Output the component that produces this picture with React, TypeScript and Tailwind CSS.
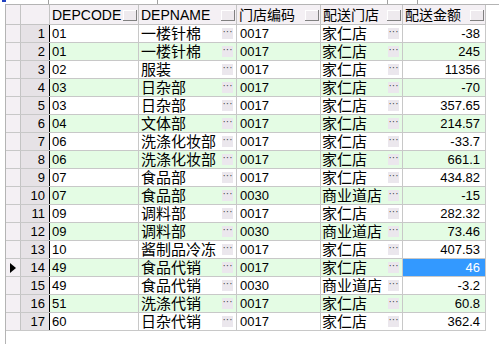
import React from 'react';

type Row = {
  code: string;
  name: string;
  store: string;
  storeName: string;
  amount: string;
};

const rows: Row[] = [
  { code: '01', name: '一楼针棉', store: '0017', storeName: '家仁店', amount: '-38' },
  { code: '01', name: '一楼针棉', store: '0017', storeName: '家仁店', amount: '245' },
  { code: '02', name: '服装', store: '0017', storeName: '家仁店', amount: '11356' },
  { code: '03', name: '日杂部', store: '0017', storeName: '家仁店', amount: '-70' },
  { code: '03', name: '日杂部', store: '0017', storeName: '家仁店', amount: '357.65' },
  { code: '04', name: '文体部', store: '0017', storeName: '家仁店', amount: '214.57' },
  { code: '06', name: '洗涤化妆部', store: '0017', storeName: '家仁店', amount: '-33.7' },
  { code: '06', name: '洗涤化妆部', store: '0017', storeName: '家仁店', amount: '661.1' },
  { code: '07', name: '食品部', store: '0017', storeName: '家仁店', amount: '434.82' },
  { code: '07', name: '食品部', store: '0030', storeName: '商业道店', amount: '-15' },
  { code: '09', name: '调料部', store: '0017', storeName: '家仁店', amount: '282.32' },
  { code: '09', name: '调料部', store: '0030', storeName: '商业道店', amount: '73.46' },
  { code: '10', name: '酱制品冷冻', store: '0017', storeName: '家仁店', amount: '407.53' },
  { code: '49', name: '食品代销', store: '0017', storeName: '家仁店', amount: '46' },
  { code: '49', name: '食品代销', store: '0030', storeName: '商业道店', amount: '-3.2' },
  { code: '51', name: '洗涤代销', store: '0017', storeName: '家仁店', amount: '60.8' },
  { code: '60', name: '日杂代销', store: '0017', storeName: '家仁店', amount: '362.4' },
];

const SELECTED_ROW = 13;

// little raised button at the right end of each column title
const HeaderButton = () => (
  <div className="ml-auto mr-[1px] mt-[1px] h-[11px] w-[14px] shrink-0 border-b border-r border-solid border-[#808080] bg-[#eeeaee] shadow-[inset_1px_1px_0_#ffffff]" />
);

const EllipsisButton = () => (
  <div className="ml-auto mr-[3px] flex h-[11px] w-[11px] shrink-0 items-center justify-center bg-[#ebe7ed] pb-[3px] text-[10px] leading-none text-[#444]">
    ···
  </div>
);

const HeaderCell: React.FC<{ width: string; label?: string; button?: boolean }> = ({ width, label, button }) => (
  <div className={`flex h-full ${width} shrink-0 items-center border-r border-[#c4c4c4] pl-[2px]`}>
    {label && <span className="whitespace-nowrap leading-none text-black">{label}</span>}
    {button && <HeaderButton />}
  </div>
);

export default function App() {
  return (
    <div
      className="h-[344px] w-[499px] overflow-hidden bg-white"
      style={{ fontFamily: '"Liberation Sans", "Noto Sans CJK SC", sans-serif' }}
    >
      {/* bits of the toolbar above, cut off */}
      <div className="flex h-[4px]">
        <div className="ml-[2px] h-[2px] w-[4px] bg-[#2040c0]" />
        <div className="ml-[42px] w-[1px] bg-[#a0a0a0]" />
        <div className="ml-[108px] w-[1px] bg-[#a0a0a0]" />
        <div className="ml-[229px] w-[1px] bg-[#a0a0a0]" />
        <div className="ml-[29px] w-[1px] bg-[#a0a0a0]" />
      </div>

      <div className="ml-[5px] h-[340px] border-l border-t border-[#b4b4b4]">
        {/* header */}
        <div className="flex h-[20px] w-fit border-b border-[#c4c4c4] bg-[#f4f0f4] text-[14px]">
          <HeaderCell width="w-[15px]" />
          <HeaderCell width="w-[29px]" />
          <HeaderCell width="w-[89px]" label="DEPCODE" button />
          <HeaderCell width="w-[98px]" label="DEPNAME" button />
          <HeaderCell width="w-[84px]" label="门店编码" button />
          <HeaderCell width="w-[82px]" label="配送门店" button />
          <HeaderCell width="w-[83px]" label="配送金额" button />
        </div>

        {rows.map((r, i) => {
          const green = i % 2 === 1;
          const rowBg = green ? 'bg-[#e4fce4]' : 'bg-white';
          const selected = i === SELECTED_ROW;
          return (
            <div key={i} className="flex h-[18px] w-fit border-b border-[#c8c8c8] text-black">
              <div className="flex w-[15px] shrink-0 items-center justify-center border-r border-[#c4c4c4] bg-[#f4f0f4]">
                {selected && (
                  <svg width="6" height="10" viewBox="0 0 6 10">
                    <path d="M0 0 L6 5 L0 10 Z" fill="#000" />
                  </svg>
                )}
              </div>
              <div className="flex w-[29px] shrink-0 items-center justify-end border-r border-black bg-[#e6e2e6] pr-[4px] text-[13px] leading-none">
                {i + 1}
              </div>
              <div className={`flex w-[89px] shrink-0 items-center border-r border-[#c8c8c8] pl-[2px] text-[13px] leading-none ${rowBg}`}>
                {r.code}
              </div>
              <div className={`flex w-[98px] shrink-0 items-center border-r border-[#c8c8c8] pl-[2px] text-[15px] leading-none ${rowBg}`}>
                <span className="whitespace-nowrap">{r.name}</span>
                <EllipsisButton />
              </div>
              <div className={`flex w-[84px] shrink-0 items-center border-r border-[#c8c8c8] pl-[3px] text-[13px] leading-none ${rowBg}`}>
                {r.store}
              </div>
              <div className={`flex w-[82px] shrink-0 items-center border-r border-[#c8c8c8] pl-[1px] text-[15px] leading-none ${rowBg}`}>
                <span className="whitespace-nowrap">{r.storeName}</span>
                <EllipsisButton />
              </div>
              <div
                className={`flex w-[83px] shrink-0 items-center justify-end border-r border-[#c8c8c8] pr-[5px] text-[13px] leading-none ${
                  selected ? 'bg-[#3399ff] text-white' : rowBg
                }`}
              >
                {r.amount}
              </div>
            </div>
          );
        })}
      </div>
    </div>
  );
}
